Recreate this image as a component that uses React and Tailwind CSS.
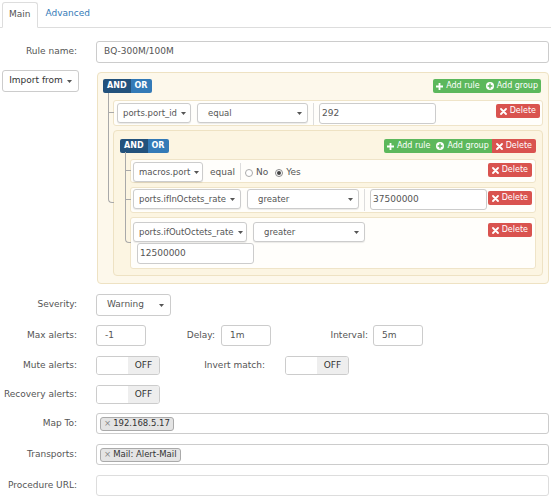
import React from "react";

function Caret() {
  return (
    <svg width="5" height="3" viewBox="0 0 5 3" className="shrink-0">
      <path d="M0 0h5L2.5 3z" fill="#555" />
    </svg>
  );
}

function PlusIcon() {
  return (
    <svg width="7" height="7" viewBox="0 0 7 7" className="shrink-0">
      <path d="M2.6 0h1.8v2.6H7v1.8H4.4V7H2.6V4.4H0V2.6h2.6z" fill="#fff" />
    </svg>
  );
}

function PlusSignIcon() {
  return (
    <svg width="8" height="8" viewBox="0 0 8 8" className="shrink-0">
      <circle cx="4" cy="4" r="4" fill="#fff" />
      <path d="M3.3 1.6h1.4v1.7h1.7v1.4H4.7v1.7H3.3V4.7H1.6V3.3h1.7z" fill="#5cb85c" />
    </svg>
  );
}

function RemoveIcon() {
  return (
    <svg width="7" height="7" viewBox="0 0 7 7" className="shrink-0">
      <path d="M1 1l5 5M6 1L1 6" stroke="#fff" strokeWidth="1.8" strokeLinecap="round" />
    </svg>
  );
}

// ligne de l'arbre du query builder
function Branch({ first, last }) {
  return (
    <>
      <span
        className={`absolute left-[-6px] w-[6px] border-b border-l border-[#a9a9a9] ${
          first ? "top-[-8px] h-[calc(50%+8px)]" : "top-[-4px] h-[calc(50%+4px)]"
        } ${last ? "rounded-bl-[4px]" : ""}`}
      />
      {!last && <span className="absolute left-[-6px] top-1/2 h-[calc(50%+4px)] border-l border-[#a9a9a9]" />}
    </>
  );
}

function AndOr() {
  return (
    <div className="flex h-[14px] overflow-hidden rounded-[2px] text-[8px] font-bold text-white">
      <span className="flex items-center bg-[#23527c] px-[4px]">AND</span>
      <span className="flex items-center bg-[#337ab7] px-[4px]">OR</span>
    </div>
  );
}

function DeleteBtn({ className = "" }) {
  return (
    <button className={`flex h-[14px] items-center gap-[3px] rounded-[2px] bg-[#d9534f] px-[4px] text-[8px] text-white ${className}`}>
      <RemoveIcon />
      Delete
    </button>
  );
}

function Field({ className, children }) {
  return (
    <div
      className={`flex h-[20px] items-center justify-between gap-[4px] rounded-[3px] border border-[#ccc] bg-white px-[5px] text-[8.5px] text-[#555] shadow-[0_1px_1px_rgba(0,0,0,0.08)] ${className}`}
    >
      <span className="whitespace-nowrap">{children}</span>
      <Caret />
    </div>
  );
}

function Value({ className, children }) {
  return (
    <div className={`flex h-[21px] items-center rounded-[3px] border border-[#ccc] bg-white pl-[2px] text-[9px] text-[#555] ${className}`}>
      {children}
    </div>
  );
}

function Divider() {
  return <span className="mx-[5px] h-[22px] w-px bg-[#ddd]" />;
}

function Rule({ first, last, children, className = "" }) {
  return (
    <div className={`relative flex rounded-[3px] border border-[#efe4c8] bg-[#fffefb] ${className}`}>
      <Branch first={first} last={last} />
      {children}
    </div>
  );
}

function Toggle() {
  return (
    <div className="flex h-[19px] w-[64px] overflow-hidden rounded-[3px] border border-[#ccc]">
      <span className="flex-1 bg-white" />
      <span className="flex w-[31px] items-center justify-center bg-[#eee] text-[9px] text-[#333]">OFF</span>
    </div>
  );
}

function Tag({ children }) {
  return (
    <span className="flex h-[14px] items-center gap-[2px] rounded-[3px] border border-[#aaa] bg-[#e4e4e4] px-[3px] text-[8.5px] text-[#333]">
      <span className="text-[#888]">×</span>
      {children}
    </span>
  );
}

function Label({ children, className = "" }) {
  return <div className={`w-[77px] shrink-0 text-right text-[9px] text-[#555] ${className}`}>{children}</div>;
}

export default function App() {
  return (
    <div className="h-[499px] w-[551px] overflow-hidden bg-white font-['DejaVu_Sans',Verdana,sans-serif]">
      {/* onglets */}
      <div className="flex h-[28px] items-end border-b border-[#ddd] pl-[2px] text-[9px]">
        <div className="mb-[-1px] flex h-[26px] items-center rounded-t-[3px] border border-b-white border-[#ddd] bg-white px-[6px] text-[#555]">
          Main
        </div>
        <div className="flex h-[26px] items-center px-[8px] text-[#337ab7]">Advanced</div>
      </div>

      {/* nom */}
      <div className="mt-[13px] flex items-center">
        <Label>Rule name:</Label>
        <div className="ml-[19px] mr-[2px] flex h-[22px] flex-1 items-center rounded-[3px] border border-[#ccc] pl-[7px] text-[9px] text-[#555]">
          BQ-300M/100M
        </div>
      </div>

      {/* builder */}
      <div className="mt-[9px] flex items-start">
        <button className="ml-[2px] mt-[-2px] flex h-[22px] w-[77px] items-center justify-center gap-[4px] rounded-[3px] border border-[#ccc] bg-white text-[9px] text-[#333]">
          Import from <Caret />
        </button>
        <div className="ml-[18px] mr-[2px] flex-1 rounded-[4px] border border-[#eee2c3] bg-[#fdf8eb] px-[5px] pb-[7px] pt-[6px]">
          <div className="flex items-center justify-between pr-[2px]">
            <AndOr />
            <div className="flex h-[14px] items-center rounded-[2px] bg-[#5cb85c] text-[8px] text-white">
              <span className="flex items-center gap-[3px] px-[3px]">
                <PlusIcon /> Add rule
              </span>
              <span className="flex items-center gap-[3px] px-[3px]">
                <PlusSignIcon /> Add group
              </span>
            </div>
          </div>

          <div className="ml-[10px] flex flex-col gap-[4px] pt-[7px]">
            <Rule first className="h-[26px] items-start pl-[3px] pr-[2px] pt-[2px]">
              <Field className="w-[74px]">ports.port_id</Field>
              <Field className="ml-[6px] w-[111px] pl-[10px]">equal</Field>
              <Divider />
              <Value className="w-[117px]">292</Value>
              <DeleteBtn className="ml-auto mt-px" />
            </Rule>

            {/* groupe imbriqué */}
            <div className="relative rounded-[4px] border border-[#eee2c3] bg-[#fcf5e2] px-[6px] pb-[6px] pt-[8px]">
              <Branch last />
              <div className="flex items-center justify-between">
                <AndOr />
                <div className="flex h-[14px] overflow-hidden rounded-[2px] text-[8px] text-white">
                  <span className="flex items-center gap-[3px] bg-[#5cb85c] px-[3px]">
                    <PlusIcon /> Add rule
                  </span>
                  <span className="flex items-center gap-[3px] bg-[#5cb85c] px-[3px]">
                    <PlusSignIcon /> Add group
                  </span>
                  <span className="flex items-center gap-[3px] bg-[#d9534f] px-[4px]">
                    <RemoveIcon /> Delete
                  </span>
                </div>
              </div>

              <div className="ml-[10px] flex flex-col gap-[4px] pt-[6px]">
                <Rule first className="h-[24px] items-start pl-[2px] pr-[3px] pt-[2px]">
                  <Field className="h-[19px] w-[70px]">macros.port</Field>
                  <span className="ml-[7px] mt-[4px] text-[9px] text-[#555]">equal</span>
                  <span className="ml-[5px] mt-px h-[17px] w-px bg-[#ddd]" />
                  <span className="ml-[4px] mt-[4px] flex items-center gap-[3px] text-[9px] text-[#555]">
                    <span className="h-[8px] w-[8px] rounded-full border border-[#aaa] bg-white" />
                    No
                  </span>
                  <span className="ml-[7px] mt-[4px] flex items-center gap-[3px] text-[9px] text-[#555]">
                    <span className="flex h-[8px] w-[8px] items-center justify-center rounded-full border border-[#888] bg-white">
                      <span className="h-[4px] w-[4px] rounded-full bg-[#444]" />
                    </span>
                    Yes
                  </span>
                  <DeleteBtn className="ml-auto mt-px" />
                </Rule>

                <Rule className="h-[26px] items-start pl-[2px] pr-[3px] pt-[1px]">
                  <Field className="w-[108px]">ports.ifInOctets_rate</Field>
                  <Field className="ml-[6px] w-[112px] pl-[10px]">greater</Field>
                  <Divider />
                  <Value className="w-[117px]">37500000</Value>
                  <DeleteBtn className="ml-auto mt-[2px]" />
                </Rule>

                <Rule last className="h-[52px] items-start pl-[2px] pr-[3px] pt-[4px]">
                  <div className="flex flex-col">
                    <div className="flex">
                      <Field className="w-[114px]">ports.ifOutOctets_rate</Field>
                      <Field className="ml-[6px] w-[112px] pl-[10px]">greater</Field>
                    </div>
                    <Value className="ml-[4px] mt-px w-[117px]">12500000</Value>
                  </div>
                  <DeleteBtn className="ml-auto mt-px" />
                </Rule>
              </div>
            </div>
          </div>
        </div>
      </div>

      {/* paramètres */}
      <div className="mt-[10px] flex items-center">
        <Label>Severity:</Label>
        <div className="ml-[19px] flex h-[22px] w-[75px] items-center justify-between rounded-[3px] border border-[#ccc] pl-[10px] pr-[6px] text-[9px] text-[#555]">
          Warning <Caret />
        </div>
      </div>

      <div className="mt-[9px] flex items-center">
        <Label>Max alerts:</Label>
        <Value className="ml-[19px] w-[50px] pl-[8px]">-1</Value>
        <div className="w-[75px] pr-[6px] text-right text-[9px] text-[#555]">Delay:</div>
        <Value className="w-[50px] pl-[8px]">1m</Value>
        <div className="w-[102px] pr-[5px] text-right text-[9px] text-[#555]">Interval:</div>
        <Value className="w-[50px] pl-[8px]">5m</Value>
      </div>

      <div className="mt-[10px] flex items-center">
        <Label>Mute alerts:</Label>
        <div className="ml-[19px]">
          <Toggle />
        </div>
        <div className="w-[125px] pr-[20px] text-right text-[9px] text-[#555]">Invert match:</div>
        <Toggle />
      </div>

      <div className="mt-[10px] flex items-center">
        <Label>Recovery alerts:</Label>
        <div className="ml-[19px]">
          <Toggle />
        </div>
      </div>

      <div className="mt-[9px] flex items-center">
        <Label>Map To:</Label>
        <div className="ml-[19px] mr-[2px] flex h-[21px] flex-1 items-center rounded-[3px] border border-[#ccc] pl-[3px]">
          <Tag>192.168.5.17</Tag>
        </div>
      </div>

      <div className="mt-[10px] flex items-center">
        <Label>Transports:</Label>
        <div className="ml-[19px] mr-[2px] flex h-[21px] flex-1 items-center rounded-[3px] border border-[#ccc] pl-[3px]">
          <Tag>Mail: Alert-Mail</Tag>
        </div>
      </div>

      <div className="mt-[10px] flex items-center">
        <Label>Procedure URL:</Label>
        <div className="ml-[19px] mr-[2px] h-[21px] flex-1 rounded-[3px] border border-[#ddd]" />
      </div>
    </div>
  );
}
